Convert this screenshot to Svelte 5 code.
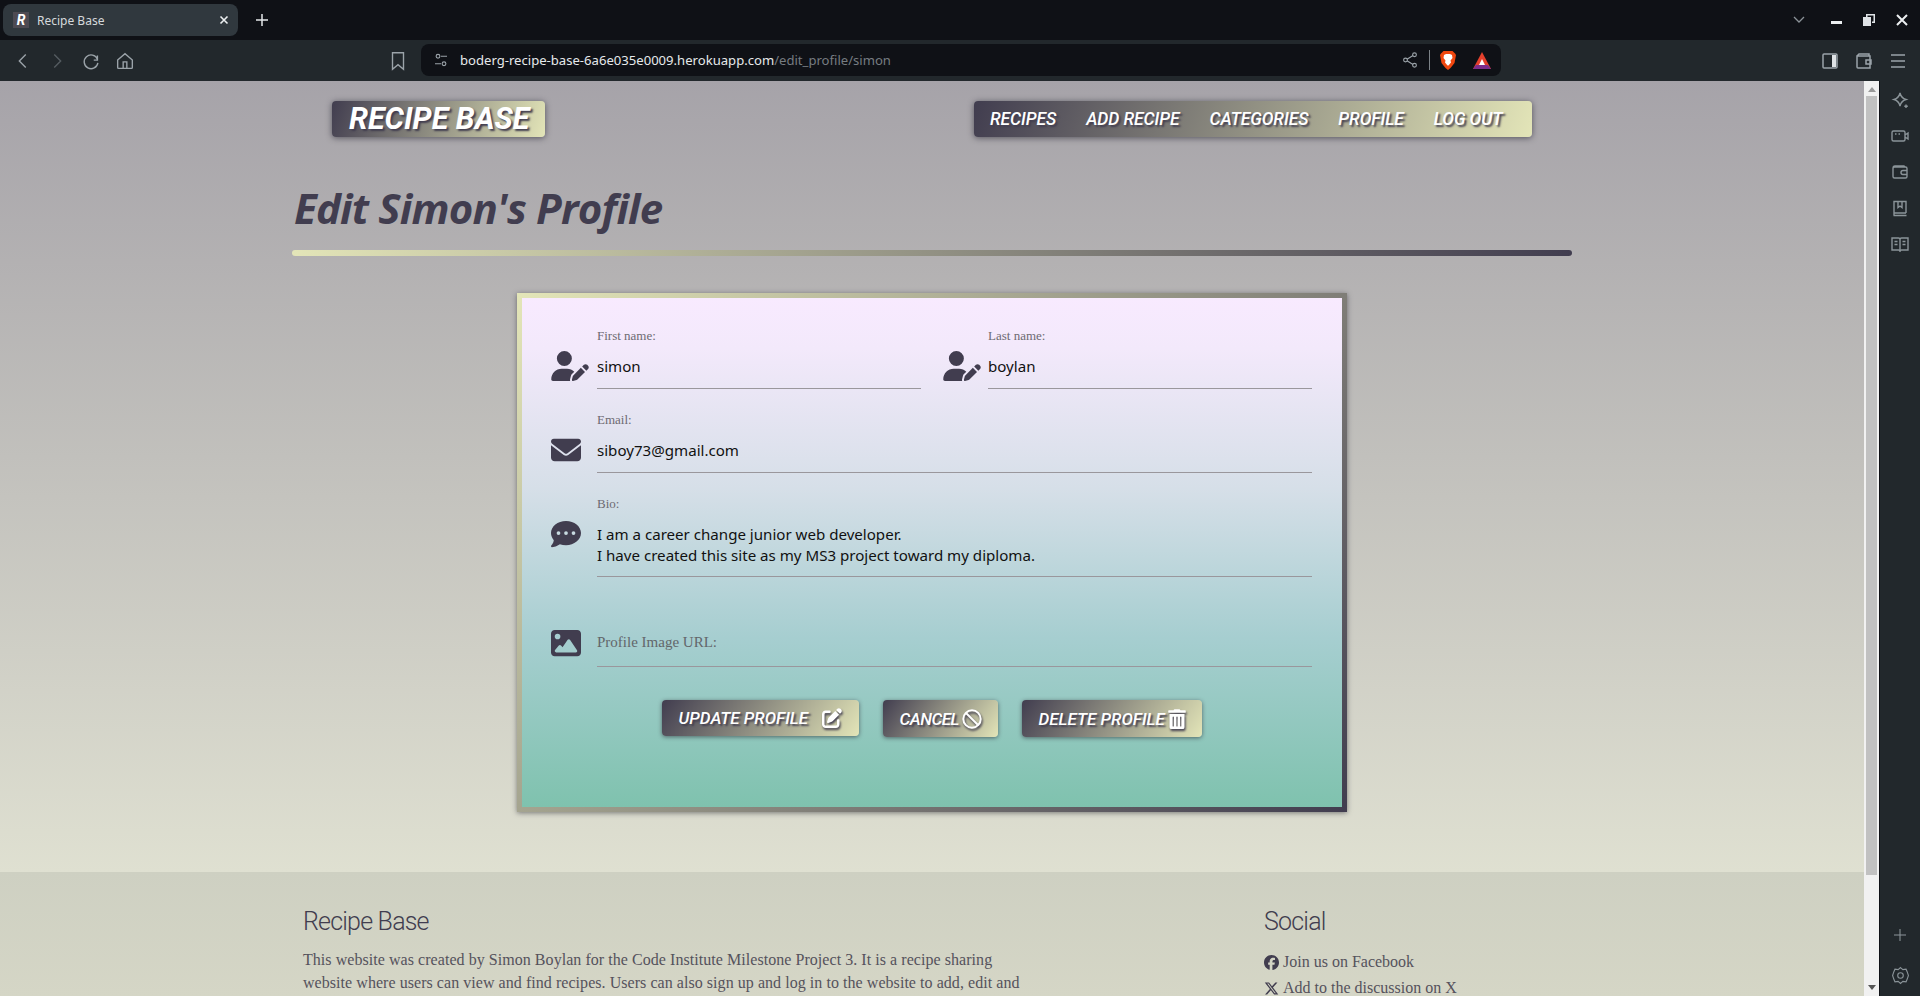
<script>
  const navLinks = ['Recipes', 'Add Recipe', 'Categories', 'Profile', 'Log Out'];
  const sideIcons = [
    'M10 3c.8 3.500 2.500 5.500 6 6.500-3.500 1-5.200 3-6 6.500-.8-3.500-2.500-5.500-6-6.500 3.500-1 5.200-3 6-6.500zM16 14.500v3.500M14.300 16.300h3.500',
    'M3.500 5h10a1.500 1.500 0 0 1 1.500 1.500v7a1.500 1.500 0 0 1-1.500 1.500h-10A1.500 1.500 0 0 1 2 13.500v-7A1.500 1.500 0 0 1 3.500 5zM15 9l3-2v6l-3-2M5 8h1.500M8.500 8h1.500',
    'M3 6.500A1.500 1.500 0 0 1 4.500 5h11A1.500 1.500 0 0 1 17 6.500v8a1.500 1.500 0 0 1-1.500 1.500h-11A1.500 1.500 0 0 1 3 14.500zM3 6.500C3 5 4 4 5 4h9l1 1M17 8.500h-4a1.500 1.500 0 0 0 0 4h4',
    'M4 15V3.500h12V15M3.500 17.500h13M4 15h12M4 15v2.500M8 3.500v6l2-1.500 2 1.500v-6',
    'M2 4h6.500c.8 0 1.500.5 1.500 1.500C10 4.500 10.700 4 11.500 4H18v12h-6.500c-.8 0-1.500.5-1.500 1 0-.5-.7-1-1.500-1H2zM10 5.500V18M4.500 7.500h3M4.500 10.500h3M12.500 7.500h3M12.500 10.500h3'
  ];
</script>

<div class="window">
  <div class="tabbar">
    <div class="tab">
      <span class="favicon">R</span>
      <span class="tab-title">Recipe Base</span>
      <svg class="tab-close" viewBox="0 0 10 10" width="10" height="10"><path d="M1.500 1.500l7 7M8.500 1.500l-7 7" /></svg>
    </div>
    <svg class="new-tab" viewBox="0 0 14 14" width="14" height="14"><path d="M7 1v12M1 7h12" /></svg>
    <div class="win-controls">
      <svg class="win-chevron" viewBox="0 0 12 8" width="12" height="8"><path d="M1 1l5 5 5-5" /></svg>
      <span class="win-min"></span>
      <svg viewBox="0 0 12 12" width="12" height="12"><path class="fill" d="M3 0h9v9H9v-1.500h1.500v-6h-6V3H3zM0 3h8v9H0z" /></svg>
      <svg class="win-x" viewBox="0 0 12 12" width="12" height="12"><path d="M1 1l10 10M11 1L1 11" /></svg>
    </div>
  </div>

  <div class="toolbar">
    <div class="tool-left">
      <svg class="tool" viewBox="0 0 24 24" width="22" height="22"><path d="M15 5l-7 7 7 7" /></svg>
      <svg class="tool dim" viewBox="0 0 24 24" width="22" height="22"><path d="M9 5l7 7-7 7" /></svg>
      <svg class="tool" viewBox="0 0 24 24" width="22" height="22"><path d="M19 10a7.500 7.500 0 1 0 .5 4M19 6v5h-4" /></svg>
      <svg class="tool" viewBox="0 0 24 24" width="22" height="22"><path d="M4 11l8-7 8 7v8a1 1 0 0 1-1 1H5a1 1 0 0 1-1-1zM10 20v-7h4v7" /></svg>
    </div>
    <svg class="tool bookmark" viewBox="0 0 24 24" width="22" height="22"><path d="M6 3h12v18l-6-5-6 5z" /></svg>
    <div class="urlbar">
      <svg class="tool" viewBox="0 0 24 24" width="18" height="18"><circle cx="8" cy="7" r="2.500" /><circle cx="16" cy="17" r="2.500" /><path d="M12 7h8M4 17h8" /></svg>
      <span class="url">boderg-recipe-base-6a6e035e0009.herokuapp.com<span class="url-path">/edit_profile/simon</span></span>
      <svg class="tool share" viewBox="0 0 24 24" width="18" height="18"><circle cx="18" cy="5" r="2.500" /><circle cx="6" cy="12" r="2.500" /><circle cx="18" cy="19" r="2.500" /><path d="M8 11l8-5M8 13l8 5" /></svg>
      <span class="url-sep"></span>
      <svg class="brave" viewBox="0 0 16 19" width="16" height="19"><path d="M3.500 0h9L15 2.500l1 1.500-1.500 8-4 5-2.500 2-2.500-2-4-5L0 4l1-1.500z" fill="#f0470f" /><path d="M4 4l2-1h4l2 1 .5 3-2 2.500.5 2-2.500 3h-1l-2.500-3 .5-2-2-2.500z" fill="#fff" /></svg>
      <svg class="bat" viewBox="0 0 18 17" width="18" height="17"><path d="M9 0l9 17H0z" fill="#e5402c" /><path d="M0 17l3-4h12l3 4z" fill="#7b2d8b" /><path d="M9 7l3 6H6z" fill="#fff" /></svg>
    </div>
    <div class="tool-right">
      <svg class="tool" viewBox="0 0 18 18" width="18" height="18"><rect x="2" y="2" width="14" height="14" rx="1" /><rect x="11" y="3" width="4" height="12" class="fill" /></svg>
      <svg class="tool" viewBox="0 0 18 18" width="18" height="18"><path d="M2 4h13v12H3a1 1 0 0 1-1-1zM2 4l2-2h10v2M16 8h-5v4h5z" /></svg>
      <svg class="tool" viewBox="0 0 18 18" width="18" height="18"><path d="M2 3h14M2 9h14M2 15h14" /></svg>
    </div>
  </div>

  <div class="viewport">
    <div class="page">
      <header class="site-header">
        <a class="brand" href="#top">Recipe Base</a>
        <nav class="main-nav">
          {#each navLinks as link}
            <a href="#top">{link}</a>
          {/each}
        </nav>
      </header>

      <main class="container">
        <h1>Edit Simon's Profile</h1>
        <div class="rule"></div>

        <form class="card">
          <div class="row two">
            <div class="field">
              <svg class="icon wide" viewBox="0 0 640 512"><path d="M224 256A128 128 0 1 0 224 0a128 128 0 1 0 0 256zm-45.700 48C79.800 304 0 383.800 0 482.300C0 498.700 13.300 512 29.700 512H322.800c-3.100-8.800-3.700-18.400-1.400-27.800l15-60.100c2.800-11.300 8.600-21.500 16.800-29.700l40.300-40.300c-32.100-31-75.700-50.100-123.900-50.100H178.300zm435.500-68.300c-15.600-15.600-40.900-15.600-56.600 0l-29.400 29.400 71 71 29.400-29.400c15.600-15.600 15.600-40.900 0-56.600l-14.400-14.400zM375.900 417c-4.100 4.100-7 9.200-8.400 14.900l-15 60.100c-1.400 5.500 .2 11.200 4.200 15.200s9.700 5.600 15.200 4.200l60.100-15c5.600-1.400 10.800-4.300 14.900-8.400L576.100 358.700l-71-71L375.900 417z" /></svg>
              <div class="control">
                <span class="label">First name:</span>
                <div class="value">simon</div>
              </div>
            </div>
            <div class="field">
              <svg class="icon wide" viewBox="0 0 640 512"><path d="M224 256A128 128 0 1 0 224 0a128 128 0 1 0 0 256zm-45.700 48C79.800 304 0 383.800 0 482.300C0 498.700 13.300 512 29.700 512H322.800c-3.100-8.800-3.700-18.400-1.400-27.800l15-60.100c2.800-11.300 8.600-21.500 16.800-29.700l40.300-40.300c-32.100-31-75.700-50.100-123.900-50.100H178.300zm435.500-68.300c-15.600-15.600-40.900-15.600-56.600 0l-29.400 29.400 71 71 29.400-29.400c15.600-15.600 15.600-40.900 0-56.600l-14.400-14.400zM375.900 417c-4.100 4.100-7 9.200-8.400 14.900l-15 60.100c-1.400 5.500 .2 11.200 4.200 15.200s9.700 5.600 15.200 4.200l60.100-15c5.600-1.400 10.800-4.300 14.900-8.400L576.100 358.700l-71-71L375.900 417z" /></svg>
              <div class="control">
                <span class="label">Last name:</span>
                <div class="value">boylan</div>
              </div>
            </div>
          </div>

          <div class="row">
            <div class="field">
              <svg class="icon" viewBox="0 0 512 512"><path d="M48 64C21.500 64 0 85.500 0 112c0 15.100 7.100 29.300 19.200 38.400L236.800 313.600c11.400 8.500 27 8.500 38.400 0L492.800 150.400c12.100-9.100 19.200-23.300 19.200-38.400c0-26.500-21.500-48-48-48H48zM0 176V384c0 35.300 28.700 64 64 64H448c35.300 0 64-28.700 64-64V176L294.400 339.200c-22.800 17.100-54 17.100-76.800 0L0 176z" /></svg>
              <div class="control">
                <span class="label">Email:</span>
                <div class="value">siboy73@gmail.com</div>
              </div>
            </div>
          </div>

          <div class="row">
            <div class="field">
              <svg class="icon" viewBox="0 0 512 512"><path d="M256 448c141.400 0 256-93.100 256-208S397.400 32 256 32S0 125.100 0 240c0 45.100 17.700 86.800 47.700 120.900c-1.900 24.500-11.400 46.300-21.400 62.900c-5.500 9.200-11.100 16.600-15.200 21.600c-2.100 2.500-3.700 4.400-4.900 5.700c-.6 .6-1 1.100-1.300 1.400l-.3 .3c-4.600 4.600-5.900 11.400-3.400 17.400c2.500 6 8.300 9.900 14.800 9.900c28.700 0 57.600-8.900 81.600-19.300c22.900-10 42.400-21.900 54.300-30.600c31.800 11.500 67 17.900 104.100 17.900zM128 208a32 32 0 1 1 0 64 32 32 0 1 1 0-64zm128 0a32 32 0 1 1 0 64 32 32 0 1 1 0-64zm96 32a32 32 0 1 1 64 0 32 32 0 1 1 -64 0z" /></svg>
              <div class="control">
                <span class="label">Bio:</span>
                <div class="value bio">I am a career change junior web developer.<br />I have created this site as my MS3 project toward my diploma.</div>
              </div>
            </div>
          </div>

          <div class="row">
            <div class="field url-field">
              <svg class="icon" viewBox="0 0 512 512"><path d="M0 96C0 60.700 28.700 32 64 32H448c35.300 0 64 28.700 64 64V416c0 35.300-28.700 64-64 64H64c-35.300 0-64-28.700-64-64V96zM323.800 202.500c-4.500-6.600-11.900-10.500-19.800-10.500s-15.400 3.900-19.800 10.500l-87 127.600L170.700 297c-4.600-5.700-11.500-9-18.700-9s-14.200 3.300-18.700 9l-64 80c-5.800 7.200-6.900 17.100-2.900 25.400s12.400 13.600 21.600 13.600h96 32H424c8.900 0 17.100-4.900 21.200-12.800s3.600-17.400-1.400-24.700l-120-176zM112 192a48 48 0 1 0 0-96 48 48 0 1 0 0 96z" /></svg>
              <div class="control">
                <div class="value placeholder">Profile Image URL:</div>
              </div>
            </div>
          </div>

          <div class="actions">
            <button type="button" class="btn update">
              Update Profile
              <svg class="btn-icon" viewBox="0 0 512 512" width="20" height="20"><path d="M471.600 21.700c-21.900-21.900-57.300-21.900-79.200 0L362.300 51.700l97.900 97.900 30.100-30.100c21.900-21.900 21.900-57.300 0-79.200L471.600 21.700zm-299.200 220c-6.100 6.100-10.800 13.600-13.500 21.900l-29.600 88.800c-2.900 8.600-.6 18.100 5.800 24.600s15.900 8.700 24.600 5.800l88.800-29.600c8.200-2.700 15.700-7.400 21.900-13.500L437.700 172.300 339.700 74.300 172.400 241.700zM96 64C43 64 0 107 0 160V416c0 53 43 96 96 96H352c53 0 96-43 96-96V320c0-17.700-14.300-32-32-32s-32 14.300-32 32v96c0 17.700-14.300 32-32 32H96c-17.700 0-32-14.300-32-32V160c0-17.700 14.300-32 32-32h96c17.700 0 32-14.300 32-32s-14.300-32-32-32H96z" /></svg>
            </button>
            <button type="button" class="btn cancel">
              Cancel
              <svg class="btn-icon ban" viewBox="0 0 20 20" width="20" height="20"><circle cx="10" cy="10" r="8.700" /><path d="M4 4l12 12" /></svg>
            </button>
            <button type="button" class="btn delete">
              Delete Profile
              <svg class="btn-icon" viewBox="0 0 448 512" width="18" height="20"><path d="M32 464a48 48 0 0 0 48 48h288a48 48 0 0 0 48-48V128H32zm272-256a16 16 0 0 1 32 0v224a16 16 0 0 1-32 0zm-96 0a16 16 0 0 1 32 0v224a16 16 0 0 1-32 0zm-96 0a16 16 0 0 1 32 0v224a16 16 0 0 1-32 0zM432 32H312l-6-12a24 24 0 0 0-21.500-13.300H163.500A23.700 23.700 0 0 0 142 20l-6 12H16A16 16 0 0 0 0 48v32a16 16 0 0 0 16 16h416a16 16 0 0 0 16-16V48a16 16 0 0 0-16-16z" /></svg>
            </button>
          </div>
        </form>
      </main>

      <footer class="site-footer">
        <div class="footer-inner">
          <div class="about">
            <h2>Recipe Base</h2>
            <p>This website was created by Simon Boylan for the Code Institute Milestone Project 3. It is a recipe sharing website where users can view and find recipes. Users can also sign up and log in to the website to add, edit and</p>
          </div>
          <div class="social">
            <h2>Social</h2>
            <a href="#top">
              <svg viewBox="0 0 512 512" width="15" height="15"><path d="M512 256C512 114.600 397.400 0 256 0S0 114.600 0 256C0 376 82.700 476.800 194.200 504.500V334.200H141.400V256h52.800V222.300c0-87.100 39.400-127.500 125-127.500c16.200 0 44.200 3.200 55.700 6.400V172c-6-.6-16.500-1-29.600-1c-42 0-58.200 15.900-58.200 57.200V256h83.600l-14.400 78.200H287V510.100C413.800 494.800 512 386.900 512 256z" /></svg>
              Join us on Facebook
            </a>
            <a href="#top">
              <svg viewBox="0 0 512 512" width="15" height="15"><path d="M389.200 48h70.600L305.600 224.200 487 464H345L233.700 318.600 106.500 464H35.800L200.700 275.500 26.800 48H172.400L272.900 180.900 389.200 48zM364.400 421.800h39.100L151.100 88h-42L364.400 421.800z" /></svg>
              Add to the discussion on X
            </a>
          </div>
        </div>
      </footer>
    </div>

    <div class="scrollbar">
      <span class="arrow up"></span>
      <div class="thumb"></div>
      <span class="arrow down"></span>
    </div>

    <aside class="sidebar">
      <div class="side-top">
        {#each sideIcons as d}
          <svg class="tool side" viewBox="0 0 20 20" width="20" height="20"><path {d} /></svg>
        {/each}
      </div>
      <div class="side-bottom">
        <svg class="tool side" viewBox="0 0 24 24" width="18" height="18"><path d="M12 4v16M4 12h16" /></svg>
        <svg class="tool side" viewBox="0 0 24 24" width="19" height="19"><path d="M12 2l3 2.500 4-.5 1.500 3.500L22 12l-1.500 4.500L19 20l-4-.5-3 2.500-3-2.500-4 .5-1.500-3.500L2 12l1.500-4.500L5 4l4 .5z" /><circle cx="12" cy="12" r="3.500" /></svg>
      </div>
    </aside>
  </div>
</div>

<style>
  :global(body) { background: #0f1116; }
  .window { height: 996px; display: flex; flex-direction: column; overflow: hidden; font-family: "Noto Sans", sans-serif; }

  .tabbar { height: 40px; background: #0f1116; display: flex; align-items: center; flex-shrink: 0; }
  .tab { width: 235px; height: 32px; margin-left: 3px; background: #30383e; border-radius: 8px; display: flex; align-items: center; padding: 0 8px 0 10px; box-sizing: border-box; color: #d5d9dc; }
  .favicon { width: 16px; height: 16px; background: #4d4a52; color: #fff; font: italic 700 14px/16px "Roboto", sans-serif; text-align: center; margin-right: 8px; }
  .tab-title { font-size: 12px; flex: 1; }
  .tab-close { fill: none; stroke: #eceff1; stroke-width: 1.600; margin-right: 1px; }
  .new-tab { fill: none; stroke: #e5e8ea; stroke-width: 1.500; margin-left: 17px; }
  .win-controls { margin-left: auto; display: flex; align-items: center; padding-right: 12px; gap: 21px; }
  .win-chevron { fill: none; stroke: #8b9298; stroke-width: 1.300; margin-right: 5px; }
  .win-min { width: 11px; height: 3px; background: #eceff1; margin-top: 5px; }
  .fill { fill: #dfe3e6; stroke: none; }
  .win-x { fill: none; stroke: #eceff1; stroke-width: 2; }

  .toolbar { height: 41px; background: #22282c; display: flex; align-items: center; flex-shrink: 0; position: relative; }
  .tool { fill: none; stroke: #9ba3a9; stroke-width: 1.500; flex-shrink: 0; }
  .tool.dim { stroke: #555c61; }
  .tool.side { stroke: #8b9499; stroke-width: 1.400; }
  .tool-left { display: flex; align-items: center; gap: 12px; padding-left: 12px; width: 375px; }
  .bookmark { margin-right: 12px; }
  .urlbar { width: 1080px; height: 32px; margin: 0 0 1px 0; background: #0f1116; border-radius: 8px; display: flex; align-items: center; padding: 0 10px 0 11px; box-sizing: border-box; }
  .url { font-size: 13.100px; color: #e6e9eb; margin-left: 10px; flex: 1; white-space: nowrap; }
  .url-path { color: #767c81; }
  .url-sep { width: 1px; height: 20px; background: #7c8287; margin: 0 10px 0 10px; }
  .brave { margin-right: 17px; }
  .tool-right { margin-left: auto; display: flex; gap: 16px; padding-right: 13px; }

  .viewport { flex: 1; min-height: 0; display: flex; }
  .page { flex: 1; min-width: 0; overflow: hidden; background: linear-gradient(#a6a3a9, #dfe0d1 791px); }

  .site-header { width: 1280px; box-sizing: border-box; margin: 0 auto; padding: 20px 40px 0; display: flex; justify-content: space-between; align-items: flex-start; }
  .brand, .main-nav { background: linear-gradient(110deg, #413d4f, #e3e5b8); border-radius: 4px; box-shadow: 0 1px 6px rgba(40, 38, 50, 0.65); color: #fff; text-decoration: none; font-family: "Roboto", sans-serif; font-style: italic; text-transform: uppercase; text-shadow: 2px 2px 2px #413d4f; }
  .brand { width: 213px; height: 36px; padding-left: 17px; box-sizing: border-box; font-size: 30.500px; line-height: 36px; font-weight: 700; white-space: nowrap; }
  .main-nav { width: 558px; height: 36px; padding-left: 16px; box-sizing: border-box; display: flex; gap: 30px; align-items: center; }
  .main-nav a { color: #fff; text-decoration: none; font-size: 17.500px; font-weight: 500; letter-spacing: -0.1px; white-space: nowrap; }

  .container { width: 1280px; margin: 0 auto; }
  h1 { margin: 46px 0 0; padding-left: 2px; font-family: "Open Sans", sans-serif; font-style: italic; font-weight: 700; font-size: 42px; line-height: 50px; letter-spacing: -0.8px; color: #413d4f; }
  .rule { height: 6px; margin-top: 17px; border-radius: 3px; background: linear-gradient(90deg, #e3e5b8, #413d4f); }

  .card { width: 830px; box-sizing: border-box; margin: 37px auto 0; padding: 31px 30px 70px 29px; border: 5px solid; border-image: linear-gradient(135deg, #e3e5b8, #413d4f) 1; background: linear-gradient(#f8eaff, #f3e9fb 50px, #d6dfe8 190px, #a6ced0 340px, #7fc2ae) padding-box; box-shadow: 0 1px 5px rgba(40, 38, 50, 0.55); }
  .row { margin-bottom: 24px; }
  .row.two { display: grid; grid-template-columns: 370px 369px; gap: 22px; }
  .field { display: flex; align-items: flex-start; }
  .icon { width: 30px; height: 30px; margin: 22px 16px 0 0; fill: #413d4f; flex-shrink: 0; }
  .icon.wide { width: 38px; margin-right: 8px; }
  .row.two .field:last-child .icon { margin-right: 7px; }
  .url-field .icon { margin-top: 27px; }
  .control { flex: 1; min-width: 0; }
  .label { display: block; height: 14px; font-family: "Liberation Serif", serif; font-size: 13px; line-height: 14px; color: #6d6a72; }
  .value { height: 46px; box-sizing: border-box; border-bottom: 1px solid #9a979c; padding-top: 12px; font-size: 15.100px; line-height: 22px; color: #111; }
  .value.bio { height: 66px; padding-top: 13px; line-height: 21px; }
  .value.placeholder { height: 66px; padding-top: 30px; font-family: "Liberation Serif", serif; font-size: 15px; color: #62666a; }

  .actions { display: flex; justify-content: center; align-items: flex-start; gap: 24px; margin-top: 33px; }
  .btn { height: 37px; border: 0; border-radius: 4px; padding: 0 0 0 17px; box-sizing: border-box; display: flex; align-items: center; background: linear-gradient(125deg, #413d4f, #e3e5b8); box-shadow: 0 1px 4px rgba(40, 38, 50, 0.6); color: #fff; font-family: "Roboto", sans-serif; font-style: italic; font-weight: 500; font-size: 17px; text-transform: uppercase; text-shadow: 2px 2px 2px #413d4f; white-space: nowrap; }
  .btn.update { width: 197px; height: 36px; gap: 14px; }
  .btn.cancel { width: 115px; gap: 3px; letter-spacing: -0.5px; }
  .btn.delete { width: 180px; gap: 3px; }
  .btn-icon { fill: #fff; filter: drop-shadow(1px 2px 1px #413d4f); flex-shrink: 0; }
  .btn-icon.ban { fill: none; stroke: #fff; stroke-width: 2; }

  .site-footer { margin-top: 60px; height: 200px; background: linear-gradient(#ced0c2, #d5d6c6 124px); }
  .footer-inner { width: 1280px; margin: 0 auto; display: flex; padding: 35px 11px 0; box-sizing: border-box; }
  .about { width: 961px; flex-shrink: 0; }
  .site-footer h2 { margin: 0 0 11px; font-family: "Roboto", sans-serif; font-weight: 300; font-size: 25px; line-height: 30px; letter-spacing: -0.8px; color: #413d4f; }
  .site-footer p { width: 725px; margin: 0; font-family: "Liberation Serif", serif; font-size: 16px; line-height: 23px; letter-spacing: 0.05px; color: #55525c; }
  .social a { display: flex; align-items: center; gap: 4px; height: 26px; color: #55525c; text-decoration: none; font-family: "Liberation Serif", serif; font-size: 16px; }
  .social h2 { padding-bottom: 1px; }
  .social svg { fill: #413d4f; }

  .scrollbar { width: 15px; background: #f1f1f1; margin-right: 1px; position: relative; flex-shrink: 0; display: flex; flex-direction: column; align-items: center; }
  .thumb { width: 11px; height: 779px; background: #c1c1c1; }
  .arrow { width: 0; height: 0; border-left: 4px solid transparent; border-right: 4px solid transparent; }
  .arrow.up { border-bottom: 5px solid #999; margin: 6px 0 4px; }
  .arrow.down { border-top: 5px solid #555; margin-top: auto; margin-bottom: 6px; }

  .sidebar { width: 40px; background: #22282c; flex-shrink: 0; display: flex; flex-direction: column; justify-content: space-between; align-items: center; }
  .side-top { display: flex; flex-direction: column; gap: 16px; padding-top: 9px; }
  .side-bottom { display: flex; flex-direction: column; gap: 22px; align-items: center; padding-bottom: 11px; }
</style>
